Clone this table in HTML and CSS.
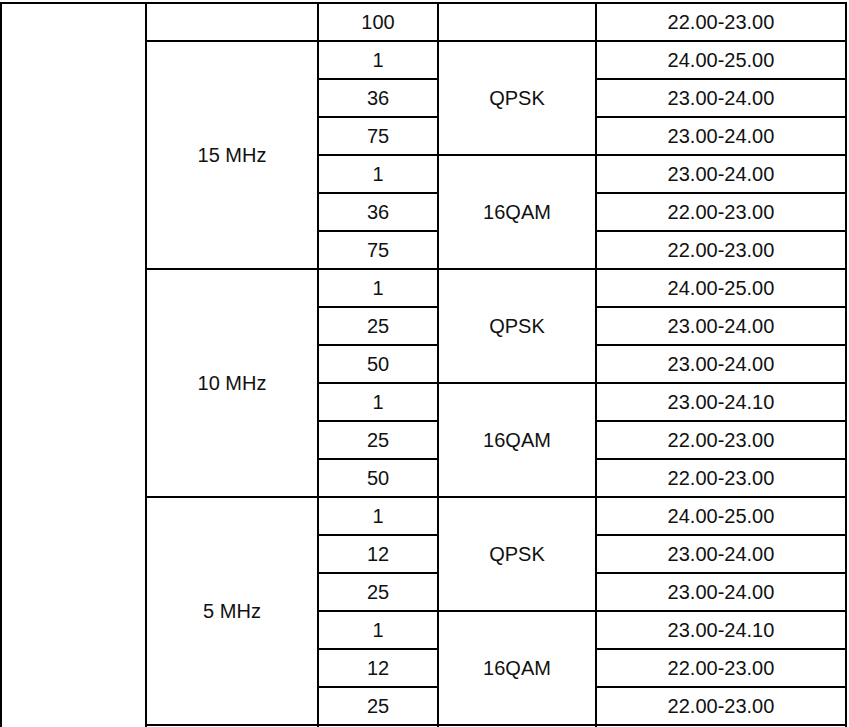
FILE: index.html
```html
<!DOCTYPE html>
<html>
<head>
<meta charset="utf-8">
<link rel="stylesheet" href="styles.css">
</head>
<body>
<table class="spec">
<colgroup>
<col class="w0"><col class="w1"><col class="w2"><col class="w3"><col class="w4">
</colgroup>
<tbody>
<tr><td class="blank" rowspan="20"></td><td></td><td>100</td><td></td><td>22.00-23.00</td></tr>

<tr><td rowspan="6">15 MHz</td><td>1</td><td rowspan="3">QPSK</td><td>24.00-25.00</td></tr>
<tr><td>36</td><td>23.00-24.00</td></tr>
<tr><td>75</td><td>23.00-24.00</td></tr>
<tr><td>1</td><td rowspan="3">16QAM</td><td>23.00-24.00</td></tr>
<tr><td>36</td><td>22.00-23.00</td></tr>
<tr><td>75</td><td>22.00-23.00</td></tr>

<tr><td rowspan="6">10 MHz</td><td>1</td><td rowspan="3">QPSK</td><td>24.00-25.00</td></tr>
<tr><td>25</td><td>23.00-24.00</td></tr>
<tr><td>50</td><td>23.00-24.00</td></tr>
<tr><td>1</td><td rowspan="3">16QAM</td><td>23.00-24.10</td></tr>
<tr><td>25</td><td>22.00-23.00</td></tr>
<tr><td>50</td><td>22.00-23.00</td></tr>

<tr><td rowspan="6">5 MHz</td><td>1</td><td rowspan="3">QPSK</td><td>24.00-25.00</td></tr>
<tr><td>12</td><td>23.00-24.00</td></tr>
<tr><td>25</td><td>23.00-24.00</td></tr>
<tr><td>1</td><td rowspan="3">16QAM</td><td>23.00-24.10</td></tr>
<tr><td>12</td><td>22.00-23.00</td></tr>
<tr><td>25</td><td>22.00-23.00</td></tr>

<tr><td></td><td></td><td></td><td></td></tr>
</tbody>
</table>
</body>
</html>
```
FILE: styles.css
```css
html, body {
  margin: 0;
  padding: 0;
  background: #ffffff;
  overflow: hidden;
}
body {
  font-family: "Liberation Sans", Arial, sans-serif;
  font-size: 20px;
  color: #111111;
}
.spec {
  border-collapse: collapse;
  table-layout: fixed;
  width: 847px;
  margin-top: 2px;
}
.w0 { width: 145px; }
.w1 { width: 172px; }
.w2 { width: 120px; }
.w3 { width: 158px; }
.w4 { width: 250px; }
.spec td {
  border: 2px solid #000000;
  height: 38px;
  padding: 0;
  text-align: center;
  vertical-align: middle;
  line-height: 22px;
  box-sizing: border-box;
}
```
